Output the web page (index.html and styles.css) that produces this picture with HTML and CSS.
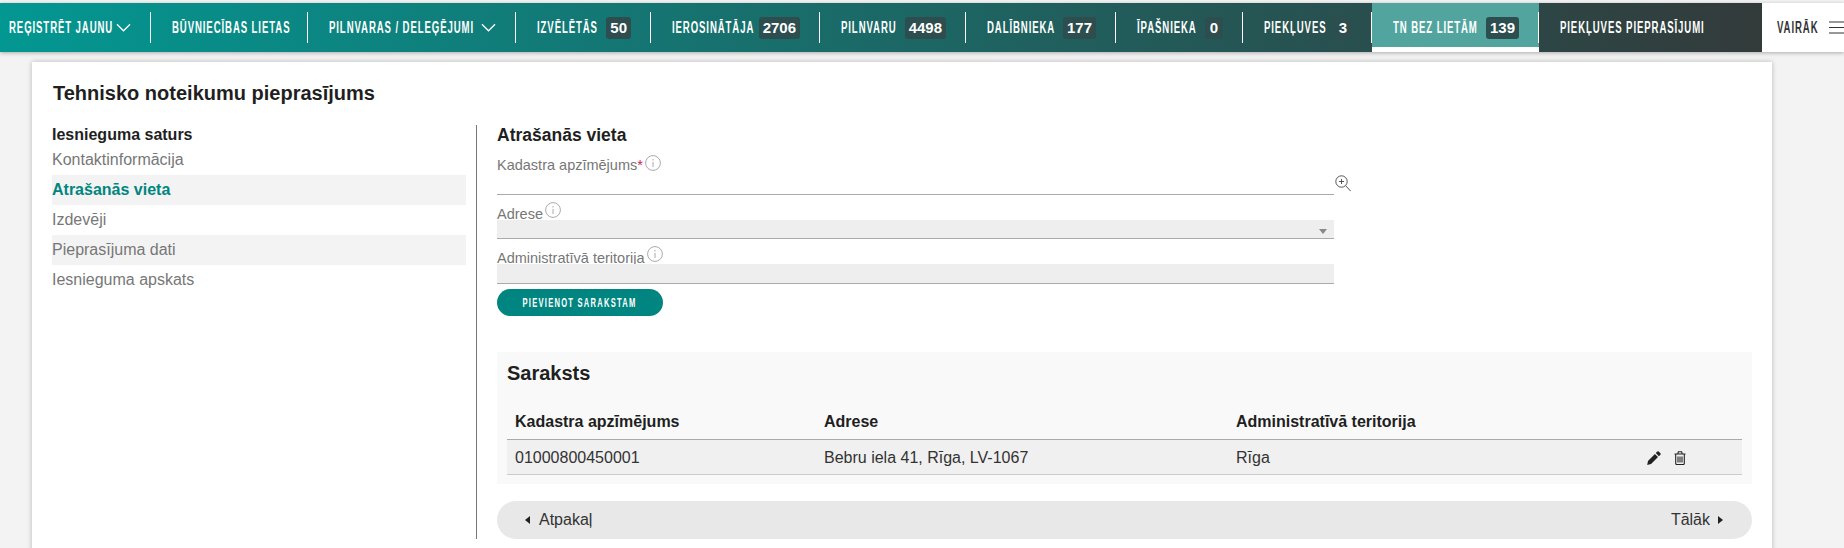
FILE: index.html
```html
<!DOCTYPE html>
<html lang="lv">
<head>
    <meta charset="UTF-8">
    <title>Tehnisko noteikumu pieprasījums</title>
    <link rel="stylesheet" href="styles.css">
</head>
<body>
    <nav class="topnav">
        <a class="nav-item"><span class="nav-label">Reģistrēt jaunu</span><svg class="chev" viewBox="0 0 16 9"><path d="M1 1l7 7 7-7"/></svg></a>
        <a class="nav-item"><span class="nav-label">Būvniecības lietas</span></a>
        <a class="nav-item"><span class="nav-label">Pilnvaras / deleģējumi</span><svg class="chev" viewBox="0 0 16 9"><path d="M1 1l7 7 7-7"/></svg></a>
        <a class="nav-item"><span class="nav-label">Izvēlētās</span><span class="badge">50</span></a>
        <a class="nav-item"><span class="nav-label">Ierosinātāja</span><span class="badge">2706</span></a>
        <a class="nav-item"><span class="nav-label">Pilnvaru</span><span class="badge">4498</span></a>
        <a class="nav-item"><span class="nav-label">Dalībnieka</span><span class="badge">177</span></a>
        <a class="nav-item"><span class="nav-label">Īpašnieka</span><span class="badge">0</span></a>
        <a class="nav-item"><span class="nav-label">Piekļuves</span><span class="badge">3</span></a>
        <a class="nav-item active"><span class="nav-label">TN bez lietām</span><span class="badge">139</span></a>
        <a class="nav-item last"><span class="nav-label">Piekļuves pieprasījumi</span></a>
        <a class="nav-more"><span class="nav-label">Vairāk</span>
            <svg class="burger" viewBox="0 0 16 13"><path d="M0 1h16M0 6.500h16M0 12h16"/></svg>
        </a>
    </nav>

    <div class="card">
        <h1>Tehnisko noteikumu pieprasījums</h1>
        <div class="columns">
            <aside class="sidebar">
                <div class="sidebar-title">Iesnieguma saturs</div>
                <ul class="steps">
                    <li>Kontaktinformācija</li>
                    <li class="current">Atrašanās vieta</li>
                    <li>Izdevēji</li>
                    <li class="shaded">Pieprasījuma dati</li>
                    <li>Iesnieguma apskats</li>
                </ul>
            </aside>

            <main class="content">
                <h2>Atrašanās vieta</h2>

                <label class="field-label first">Kadastra apzīmējums<span class="req">*</span>
                    <svg class="info" viewBox="0 0 16 16"><circle cx="8" cy="8" r="7.400"/><path d="M8 7v5M8 4v1.500"/></svg>
                </label>
                <div class="search-row">
                    <div class="line-input"></div>
                    <svg class="zoom-icon" viewBox="0 0 16 17"><circle cx="6.500" cy="6.500" r="5.700"/><path d="M4 6.500h5M6.500 4v5M10.700 10.700l5 5.500"/></svg>
                </div>

                <label class="field-label">Adrese
                    <svg class="info" viewBox="0 0 16 16"><circle cx="8" cy="8" r="7.400"/><path d="M8 7v5M8 4v1.500"/></svg>
                </label>
                <div class="filled-input select"><span class="caret"></span></div>

                <label class="field-label">Administratīvā teritorija
                    <svg class="info" viewBox="0 0 16 16"><circle cx="8" cy="8" r="7.400"/><path d="M8 7v5M8 4v1.500"/></svg>
                </label>
                <div class="filled-input tall"></div>

                <button class="btn-add" type="button"><span class="btn-label">Pievienot sarakstam</span></button>

                <section class="list-panel">
                    <h3>Saraksts</h3>
                    <div class="list-row list-head">
                        <div>Kadastra apzīmējums</div>
                        <div>Adrese</div>
                        <div>Administratīvā teritorija</div>
                        <div></div>
                    </div>
                    <div class="list-row list-data">
                        <div>01000800450001</div>
                        <div>Bebru iela 41, Rīga, LV-1067</div>
                        <div>Rīga</div>
                        <div class="row-actions">
                            <svg class="pencil" viewBox="0 0 14 14"><path d="M10.300.6a1 1 0 0 1 1.400 0l1.700 1.700a1 1 0 0 1 0 1.400l-1.500 1.500-3.100-3.100zM7.900 3L11 6.100 4 13.100.2 14 1 10z"/></svg>
                            <svg class="trash" viewBox="0 0 12 14"><path class="trash-line" d="M.5 3h11M1.700 3v9.500a1 1 0 0 0 1 1h6.600a1 1 0 0 0 1-1V3M3.700 3l.7-2.300h3.200L8.300 3"/><path class="trash-line" d="M4 5.500v6M6 5.500v6M8 5.500v6"/></svg>
                        </div>
                    </div>
                </section>

                <div class="pager">
                    <a class="pager-link"><span class="tri-left"></span>Atpakaļ</a>
                    <a class="pager-link">Tālāk<span class="tri-right"></span></a>
                </div>
            </main>
        </div>
    </div>
</body>
</html>
```

FILE: styles.css
```css
/* Pamata stili */
* {
    margin: 0;
    padding: 0;
    box-sizing: border-box;
}

html, body {
    height: 548px;
    overflow: hidden;
}

body {
    font-family: "Liberation Sans", Arial, sans-serif;
    font-size: 16px;
    background-color: #f3f3f3;
    padding-top: 3px;
    color: #1f1f1f;
}

/* Augšējā izvēlne */
.topnav {
    display: grid;
    grid-template-columns: 151px 157px 208px 135px 169px 146px 150px 127px 129px 167px 223px 82px;
    height: 49px;
    background: linear-gradient(to right, #039792 0, #333a3a 1762px);
    box-shadow: 0 1px 4px rgba(0, 0, 0, 0.3);
    font-size: 16px;
    font-weight: bold;
    text-transform: uppercase;
}

.nav-item {
    display: flex;
    align-items: center;
    position: relative;
    height: 100%;
    padding: 0 20px 0 21px;
    color: #fff;
    white-space: nowrap;
}

.nav-item:first-child {
    padding-left: 9px;
}

.nav-item::after {
    content: "";
    position: absolute;
    right: 0;
    top: 9px;
    height: 31px;
    width: 1px;
    background-color: #fff;
}

.nav-item.last::after {
    display: none;
}

.nav-item.active {
    background-color: #52a59e;
    box-shadow: inset 0 -5px 0 #fff;
}

/* Šaura fonta nav, tāpēc teksts saspiests */
.nav-label {
    flex: 1 1 0;
    min-width: 0;
    letter-spacing: 1.500px;
    transform: scaleX(0.6);
    transform-origin: left center;
}

.badge {
    flex: none;
    padding: 0 4px;
    min-width: 18px;
    height: 22px;
    line-height: 22px;
    text-align: center;
    background-color: #2d4d4e;
    border-radius: 3px;
    font-size: 15px;
}

.chev {
    flex: none;
    width: 15px;
    height: 9px;
    fill: none;
    stroke: #fff;
    stroke-width: 1.300;
}

.nav-more {
    display: flex;
    align-items: center;
    background-color: #fff;
    color: #333;
    padding-left: 15px;
    white-space: nowrap;
}

.nav-more .nav-label {
    flex: none;
    width: 52px;
}

.burger {
    flex: none;
    width: 16px;
    height: 13px;
    fill: none;
    stroke: #333;
    stroke-width: 1.200;
}

/* Kartīte */
.card {
    width: 1740px;
    height: 600px;
    margin: 10px 0 0 32px;
    padding: 19px 20px 0;
    background-color: #fff;
    box-shadow: 0 0 5px rgba(0, 0, 0, 0.25);
}

h1 {
    font-size: 20px;
    line-height: 24px;
    font-weight: bold;
    margin: 0 0 20px 1px;
}

.columns {
    display: flex;
    height: 414px;
}

.sidebar {
    width: 414px;
    margin-right: 10px;
}

.sidebar-title {
    font-weight: bold;
    line-height: 20px;
}

.steps {
    list-style: none;
}

.steps li {
    height: 30px;
    line-height: 30px;
    color: #777;
}

.steps li.current {
    background-color: #f3f3f3;
    color: #008580;
    font-weight: bold;
}

.steps li.shaded {
    background-color: #f3f3f3;
}

.content {
    width: 1276px;
    border-left: 1px solid #777;
    padding-left: 20px;
}

h2 {
    font-size: 17.500px;
    line-height: 20px;
}

.field-label {
    display: block;
    height: 18px;
    color: #777;
    font-size: 14.500px;
    line-height: 14px;
    margin-top: 7px;
}

.field-label.first {
    height: 20px;
    margin-top: 10px;
    line-height: 16px;
}

.req {
    color: #d2184f;
}

.info {
    width: 16px;
    height: 16px;
    margin-left: -2px;
    vertical-align: 1px;
    fill: none;
    stroke: #aaa;
    stroke-width: 1;
}

.first .info {
    vertical-align: -1px;
}

.search-row {
    display: flex;
    align-items: flex-start;
    height: 20px;
}

.line-input {
    width: 837px;
    height: 20px;
    border-bottom: 1px solid #aaa;
}

.zoom-icon {
    width: 16px;
    height: 17px;
    margin-left: 1px;
    fill: none;
    stroke: #555;
    stroke-width: 1;
}

.filled-input {
    width: 837px;
    height: 19px;
    background-color: #eee;
    border-bottom: 1px solid #aaa;
    position: relative;
}

.filled-input.tall {
    height: 20px;
}

.caret {
    position: absolute;
    right: 7px;
    top: 9px;
    border-left: 4px solid transparent;
    border-right: 4px solid transparent;
    border-top: 5px solid #888;
}

.btn-add {
    display: flex;
    justify-content: center;
    align-items: center;
    width: 166px;
    height: 27px;
    margin-top: 5px;
    border: none;
    border-radius: 14px;
    background-color: #008580;
    color: #fff;
    font-family: "Liberation Sans", sans-serif;
    font-size: 12px;
    font-weight: bold;
    letter-spacing: 2px;
    text-transform: uppercase;
}

.btn-label {
    flex: none;
    white-space: nowrap;
    transform: scaleX(0.63);
}

/* Saraksts */
.list-panel {
    margin-top: 36px;
    height: 132px;
    padding: 11px 10px 0;
    background-color: #f9f9f9;
}

h3 {
    font-size: 20px;
    line-height: 20px;
    margin-bottom: 22px;
}

.list-row {
    display: grid;
    grid-template-columns: 309px 412px 411px 1fr;
    padding-left: 8px;
    align-items: center;
}

.list-head {
    height: 35px;
    padding-bottom: 1px;
    font-weight: bold;
    border-bottom: 1px solid #aaa;
}

.list-data {
    height: 35px;
    padding-top: 1px;
    background-color: #f0f0f0;
    border-bottom: 1px solid #ccc;
    color: #333;
}

.row-actions {
    display: flex;
    align-items: center;
    gap: 13px;
}

.pencil {
    width: 14px;
    height: 14px;
    fill: #222;
}

.trash {
    width: 12px;
    height: 14px;
}

.trash-line {
    fill: none;
    stroke: #222;
    stroke-width: 1.100;
}

/* Atpakaļ / Tālāk */
.pager {
    display: flex;
    justify-content: space-between;
    align-items: center;
    margin-top: 17px;
    height: 38px;
    padding: 0 29px 0 28px;
    background-color: #e8e8e8;
    border-radius: 19px;
    color: #333;
}

.pager-link {
    display: flex;
    align-items: center;
}

.tri-left {
    margin-right: 9px;
    border-top: 4px solid transparent;
    border-bottom: 4px solid transparent;
    border-right: 5px solid #222;
}

.tri-right {
    margin-left: 8px;
    border-top: 4px solid transparent;
    border-bottom: 4px solid transparent;
    border-left: 5px solid #222;
}
```
